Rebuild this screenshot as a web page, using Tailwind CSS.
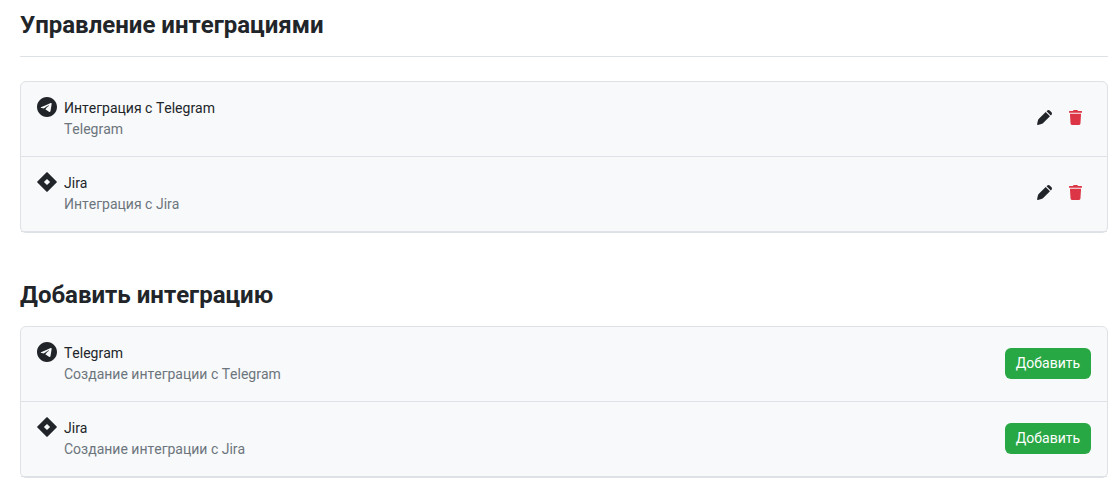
<!DOCTYPE html>
<html lang="ru">
<head>
<meta charset="utf-8">
<meta name="viewport" content="width=device-width, initial-scale=1">
<title>Управление интеграциями</title>
<script src="https://cdn.jsdelivr.net/npm/@tailwindcss/browser@4"></script>
</head>
<body class="bg-white pl-5 pr-3 font-['Roboto',sans-serif] text-sm leading-[21px] text-[#212529] [font-kerning:none]">
<svg class="hidden" aria-hidden="true">
  <symbol id="telegram" viewBox="0 8 496 496"><path d="M248,8C111.033,8,0,119.033,0,256S111.033,504,248,504,496,392.967,496,256,384.967,8,248,8ZM362.952,176.66c-3.732,39.215-19.881,134.378-28.1,178.3-3.476,18.584-10.322,24.816-16.948,25.425-14.4,1.326-25.338-9.517-39.287-18.661-21.827-14.308-34.158-23.215-55.346-37.177-24.485-16.135-8.612-25,5.342-39.5,3.652-3.793,67.107-61.51,68.335-66.746.153-.655.3-3.1-1.154-4.384s-3.59-.849-5.135-.5q-3.283.746-104.608,69.142-14.845,10.194-26.894,9.934c-8.855-.191-25.888-5.006-38.551-9.123-15.531-5.048-27.875-7.717-26.8-16.291q.84-6.7,18.45-13.7,108.446-47.248,144.628-62.3c68.872-28.647,83.183-33.623,92.511-33.789,2.052-.034,6.639.474,9.61,2.885a10.452,10.452,0,0,1,3.53,6.716A43.765,43.765,0,0,1,362.952,176.66Z"/></symbol>
  <symbol id="jira" viewBox="0 0 20 20"><path fill-rule="evenodd" d="M9.400.400a.8.8 0 0 1 1.200 0l9 9a.8.8 0 0 1 0 1.200l-9 9a.8.8 0 0 1-1.200 0l-9-9a.8.8 0 0 1 0-1.200zM10 6.900 6.900 10l3.100 3.100 3.100-3.100z"/></symbol>
  <symbol id="pencil" viewBox="0 0 14 14"><path d="M8.100 1.900 1.300 8.700Q.5 10.400.1 13.200q-.1.800.700.700Q3.600 13.500 5.300 12.700l6.800-6.800zM8.900 1.100 12.900 5.100 13.400 4.600Q14.500 3.300 13.500 2.100L11.900.5Q10.700-.4 9.600.4z"/></symbol>
  <symbol id="trash" viewBox="0 0 448 512"><path d="M432 32H312l-9.400-18.700A24 24 0 0 0 281.100 0H166.800a23.720 23.720 0 0 0-21.400 13.300L136 32H16A16 16 0 0 0 0 48v32a16 16 0 0 0 16 16h416a16 16 0 0 0 16-16V48a16 16 0 0 0-16-16zM32 128l21.200 339a48 48 0 0 0 47.900 45h245.800a48 48 0 0 0 47.900-45L416 128z"/></symbol>
</svg>
<main>
  <section>
    <h1 class="border-b border-[#dee2e6] pt-2.5 pb-4 text-2xl leading-[30px] font-bold">Управление интеграциями</h1>
    <ul class="mt-6 rounded-md border border-[#dee2e6] bg-[#f8f9fa]">
      <li class="flex items-center border-b border-[#dee2e6] px-4 pt-[15px] pb-4">
        <svg class="mr-[7px] size-5 shrink-0 self-start fill-current" aria-hidden="true"><use href="#telegram"/></svg>
        <div class="grow pt-px"><p>Интеграция с Telegram</p><p class="text-[#6c757d]">Telegram</p></div>
        <div class="flex gap-1 pr-0.5 pb-0.5">
          <button type="button" aria-label="Изменить Telegram" class="grid size-[27px] place-items-center"><svg class="size-[15px] fill-current" aria-hidden="true"><use href="#pencil"/></svg></button>
          <button type="button" aria-label="Удалить Telegram" class="grid size-[27px] place-items-center text-[#dc3545]"><svg class="h-[15px] w-[13px] fill-current" aria-hidden="true"><use href="#trash"/></svg></button>
        </div>
      </li>
      <li class="flex items-center border-b border-[#dee2e6] px-4 pt-[15px] pb-4">
        <svg class="mr-[7px] size-5 shrink-0 self-start fill-current" aria-hidden="true"><use href="#jira"/></svg>
        <div class="grow pt-px"><p>Jira</p><p class="text-[#6c757d]">Интеграция с Jira</p></div>
        <div class="flex gap-1 pr-0.5 pb-0.5">
          <button type="button" aria-label="Изменить Jira" class="grid size-[27px] place-items-center"><svg class="size-[15px] fill-current" aria-hidden="true"><use href="#pencil"/></svg></button>
          <button type="button" aria-label="Удалить Jira" class="grid size-[27px] place-items-center text-[#dc3545]"><svg class="h-[15px] w-[13px] fill-current" aria-hidden="true"><use href="#trash"/></svg></button>
        </div>
      </li>
    </ul>
  </section>
  <section class="mt-12">
    <h2 class="text-2xl leading-[29px] font-bold">Добавить интеграцию</h2>
    <ul class="mt-4 rounded-md border border-[#dee2e6] bg-[#f8f9fa]">
      <li class="flex items-center border-b border-[#dee2e6] px-4 pt-[15px] pb-4">
        <svg class="mr-[7px] size-5 shrink-0 self-start fill-current" aria-hidden="true"><use href="#telegram"/></svg>
        <div class="grow pt-px"><p>Telegram</p><p class="text-[#6c757d]">Создание интеграции с Telegram</p></div>
        <button type="button" class="min-w-[86px] rounded-md bg-[#28a745] px-2 py-[5px] text-white">Добавить</button>
      </li>
      <li class="flex items-center border-b border-[#dee2e6] px-4 pt-[15px] pb-4">
        <svg class="mr-[7px] size-5 shrink-0 self-start fill-current" aria-hidden="true"><use href="#jira"/></svg>
        <div class="grow pt-px"><p>Jira</p><p class="text-[#6c757d]">Создание интеграции с Jira</p></div>
        <button type="button" class="min-w-[86px] rounded-md bg-[#28a745] px-2 py-[5px] text-white">Добавить</button>
      </li>
    </ul>
  </section>
</main>
</body>
</html>
